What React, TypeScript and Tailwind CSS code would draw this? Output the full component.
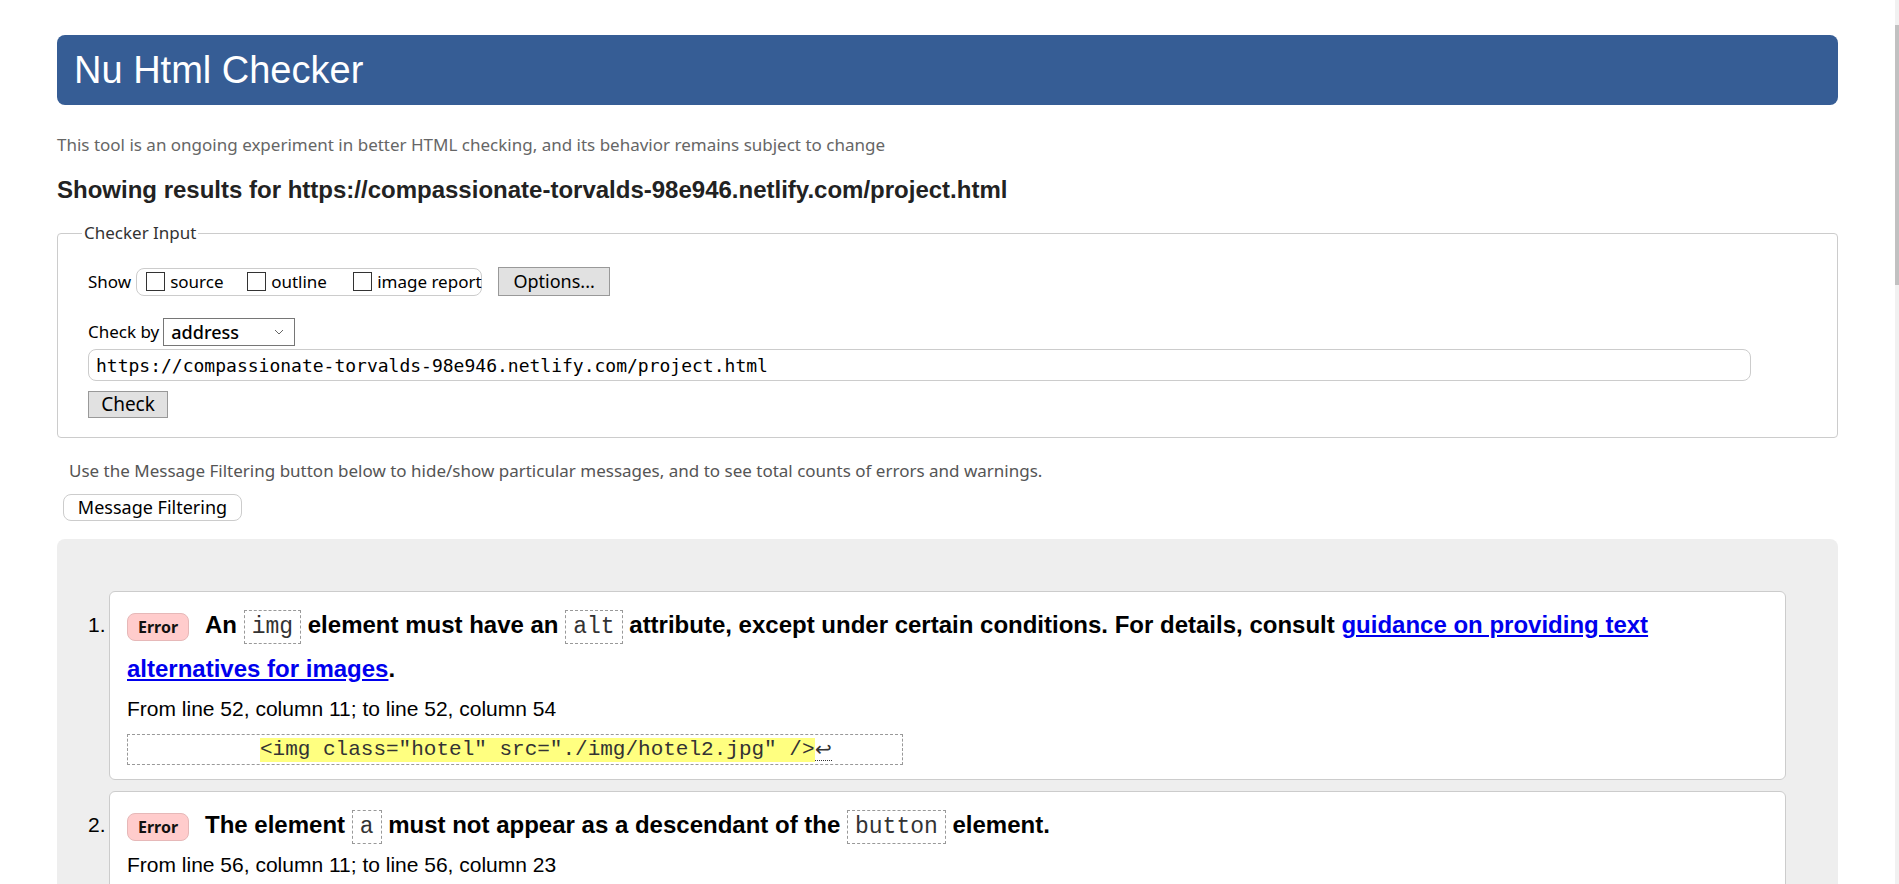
const sans = "font-['Liberation_Sans',Arial,sans-serif]";
const ui = "font-['Noto_Sans',sans-serif]";
const mono = "font-['Liberation_Mono',monospace]";

const Code = ({ children }: { children: string }) => (
  <code
    className={`${mono} inline-block h-[34px] border border-dashed border-[#999] px-[7px] text-[23px] leading-[32px] font-normal text-[#333]`}>
    {children}
  </code>
);

const Badge = () => (
  <span
    className={`${ui} inline-flex h-[28px] w-[62px] items-center justify-center rounded-[8px] border border-[#e6b8b8] bg-[#ffcccc] text-[16px] font-bold text-[#111]`}>
    Error
  </span>
);

const Checkbox = ({ label, width }: { label: string; width: string }) => (
  <span className={`flex items-center gap-[5px] ${width}`}>
    <span className="h-[19px] w-[19px] shrink-0 border border-[#333] bg-white" />
    <span>{label}</span>
  </span>
);

export default function App() {
  return (
    <div className="flex h-[884px] overflow-hidden bg-white">
      {/* page */}
      <div className={`${sans} flex-1 px-[57px] pt-[35px] text-black`}>
        <h1 className="flex h-[70px] items-center rounded-[8px] bg-[#365d95] pl-[17px] text-[38px] font-normal text-white">
          Nu Html Checker
        </h1>

        <p className={`${ui} mt-[28px] text-[17px] leading-[24px] text-[#666]`}>
          This tool is an ongoing experiment in better HTML checking, and its behavior remains subject to change
        </p>

        <h2 className="mt-[19px] text-[24px] leading-[28px] font-bold text-[#222]">
          Showing results for https://compassionate-torvalds-98e946.netlify.com/project.html
        </h2>

        {/* checker input */}
        <fieldset className={`${ui} mt-[19px] h-[215px] rounded-[4px] border border-[#ccc] text-[17px]`}>
          <legend className="ml-[24px] px-[2px] text-[17px] leading-[20px] text-[#333]">Checker Input</legend>

          <div className="pl-[30px]">
            <div className="mt-[24px] flex h-[29px] items-center whitespace-nowrap">
              <span className="mr-[5px]">Show</span>
              <div className="flex h-[28px] w-[346px] items-center rounded-[8px] border border-[#ccc] pl-[9px]">
                <Checkbox label="source" width="w-[101px]" />
                <Checkbox label="outline" width="w-[106px]" />
                <Checkbox label="image report" width="w-[120px]" />
              </div>
              <button className="ml-[16px] h-[29px] w-[112px] border border-[#999] bg-[#e1e1e1] text-[18px]">
                Options...
              </button>
            </div>

            <div className="mt-[22px] flex items-center">
              <span className="mr-[4px]">Check by</span>
              <div className="flex h-[28px] w-[132px] items-center justify-between border border-[#767676] pr-[10px] pl-[7px] text-[18px] font-medium">
                <span>address</span>
                <svg width="10" height="6" viewBox="0 0 10 6">
                  <path d="M1 1l4 4 4-4" fill="none" stroke="#666" strokeWidth="1" />
                </svg>
              </div>
            </div>

            <div className="mt-[3px] flex h-[32px] w-[1663px] items-center rounded-[8px] border border-[#ccc] pl-[7px]">
              <span className="font-['DejaVu_Sans_Mono',monospace] text-[18px]">
                https://compassionate-torvalds-98e946.netlify.com/project.html
              </span>
            </div>

            <button className="mt-[10px] h-[27px] w-[80px] border border-[#999] bg-[#e1e1e1] text-[19px] leading-[25px]">
              Check
            </button>
          </div>
        </fieldset>

        <p className={`${ui} mt-[21px] pl-[12px] text-[17px] leading-[24px] text-[#555]`}>
          Use the Message Filtering button below to hide/show particular messages, and to see total counts of errors
          and warnings.
        </p>

        <button
          className={`${ui} mt-[11px] ml-[6px] h-[27px] w-[179px] rounded-[8px] border border-[#ccc] bg-white text-[18px] leading-[25px]`}>
          Message Filtering
        </button>

        {/* results */}
        <div className="mt-[18px] h-[400px] rounded-t-[8px] bg-[#eeeeee] pt-[52px] pr-[52px] pl-[31px]">
          <div className="flex">
            <span className="w-[21px] pt-[22px] text-[21px] leading-[24px]">1.</span>
            <div className="flex-1 rounded-[6px] border border-[#ccc] bg-white pt-[11px] pr-[16px] pb-[14px] pl-[17px]">
              <div className="text-[24px] leading-[44px] font-bold">
                <Badge />
                <span className="ml-[16px]">An </span>
                <Code>img</Code> element must have an <Code>alt</Code> attribute, except under certain conditions. For
                details, consult{' '}
                <a className="text-[#0000ee] underline">
                  <span>guidance on providing text</span> <span>alternatives for images</span>
                </a>
                .
              </div>
              <p className="mt-[3px] text-[21px] leading-[30px]">From line 52, column 11; to line 52, column 54</p>
              <div className="mt-[10px] flex h-[31px] w-[776px] items-center border border-dashed border-[#999] pl-[132px]">
                <span className={`${mono} bg-[#ffff80] text-[21px] leading-[24px] text-[#333]`}>
                  {'<img class="hotel" src="./img/hotel2.jpg" />'}
                </span>
                <span className="border-b border-dotted border-[#333] text-[20px] leading-[22px] text-[#333]">↩</span>
              </div>
            </div>
          </div>

          <div className="mt-[11px] flex">
            <span className="w-[21px] pt-[22px] text-[21px] leading-[24px]">2.</span>
            <div className="flex-1 rounded-[6px] border border-[#ccc] bg-white pt-[11px] pr-[16px] pb-[14px] pl-[17px]">
              <div className="text-[24px] leading-[44px] font-bold">
                <Badge />
                <span className="ml-[16px]">The element </span>
                <Code>a</Code> must not appear as a descendant of the <Code>button</Code> element.
              </div>
              <p className="mt-[3px] text-[21px] leading-[30px]">From line 56, column 11; to line 56, column 23</p>
            </div>
          </div>
        </div>
      </div>

      {/* scrollbar */}
      <div className="flex w-[4px] flex-col bg-[#f1f1f1] pt-[25px]">
        <div className="h-[260px] bg-[#c1c1c1]" />
      </div>
    </div>
  );
}
